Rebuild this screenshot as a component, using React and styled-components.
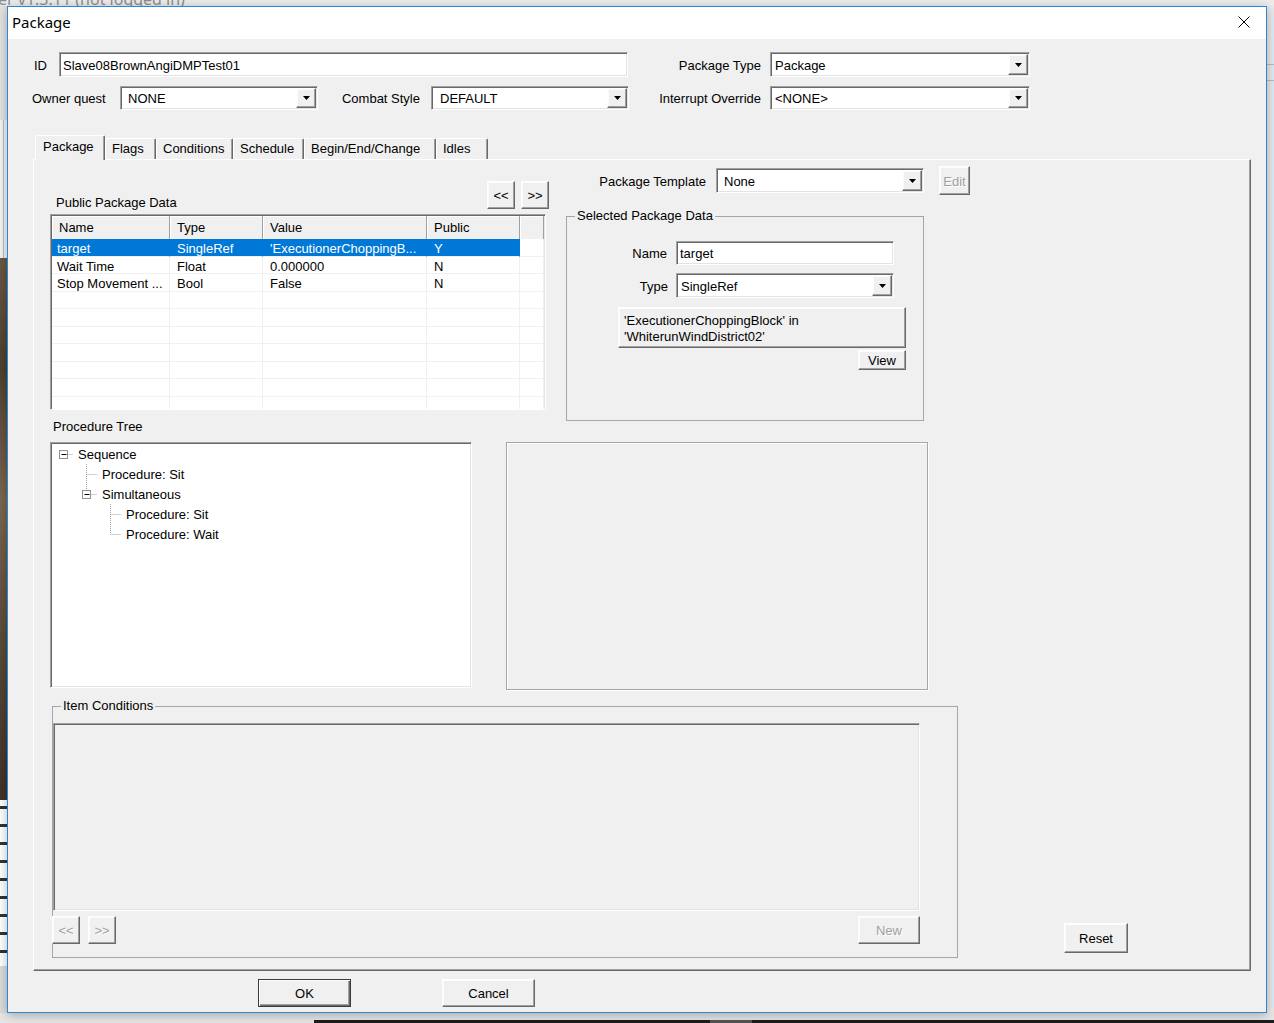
import React from 'react';
import styled, { createGlobalStyle, css } from 'styled-components';

const FONT = `"Liberation Sans", Arial, sans-serif`;

const GlobalStyle = createGlobalStyle`
  html, body { margin: 0; padding: 0; }
  body {
    width: 1274px; height: 1023px; overflow: hidden;
    background: #ececec;
    font-family: ${FONT}; font-size: 13px; color: #000;
  }
  * { box-sizing: border-box; }
`;

const raised = css`
  background: #f0f0f0;
  border: 1px solid;
  border-color: #fff #696969 #696969 #fff;
  box-shadow: inset -1px -1px #a0a0a0, inset 1px 1px #fbfbfb;
`;

const sunken = css`
  border: 1px solid;
  border-color: #a0a0a0 #fff #fff #a0a0a0;
  box-shadow: inset 1px 1px #696969, inset -1px -1px #e3e3e3;
`;

/* text sits 1px lower than a centred line box, as in the dialog font */
const lowText = css`
  line-height: 16px;
  padding-top: 2px;
`;

/* ---------- desktop & backdrop window ---------- */
const Desktop = styled.div`
  position: relative;
  width: 1274px;
  height: 1023px;
  overflow: hidden;
`;

const Backdrop = styled.div`
  position: absolute;
  inset: 0;
  display: grid;
  grid-template-columns: 7px 1fr 7px;
  grid-template-rows: 6px 1fr 10px;
  background: #ececec;
`;

const BackdropTitle = styled.div`
  grid-column: 1 / -1;
  height: 6px;
  overflow: hidden;
  white-space: nowrap;
  color: #8e8e8e;
  font: 16px/16px "Noto Sans", ${FONT};
  span { display: block; margin: -9px 0 0 -2px; }
`;

const BackdropSide = styled.div`
  display: flex;
  flex-direction: column;
`;

const Strip = styled.div`
  height: ${p => p.$h}px;
  flex: ${p => (p.$grow ? 1 : 'none')};
  background: ${p => p.$bg};
`;

const BackdropMain = styled.div`
  background: #f0f0f0;
`;

const BackdropBottom = styled.div`
  grid-column: 1 / -1;
  display: flex;
  align-items: flex-end;
  background: #e6e6e6;
`;

const TaskBar = styled.div`
  margin-left: 314px;
  flex: 1;
  height: 3px;
  background: linear-gradient(90deg, #1d1d1d 0 396px, #555 396px 438px, #1d1d1d 438px);
`;

/* ---------- dialog ---------- */
const Dialog = styled.div`
  position: absolute;
  left: 7px;
  top: 6px;
  width: 1260px;
  height: 1007px;
  border: 1px solid #2b88d8;
  background: #f0f0f0;
  display: flex;
  flex-direction: column;
  box-shadow: 0 2px 10px rgba(0, 0, 0, 0.28);
`;

const TitleBar = styled.div`
  height: 32px;
  flex: none;
  background: #fff;
  display: flex;
  align-items: center;
  justify-content: space-between;
  padding: 0 0 3px 4px;
`;

const TitleText = styled.span`
  font: 15px/20px "Noto Sans", ${FONT};
  color: #000;
`;

const CloseButton = styled.div`
  width: 44px;
  height: 29px;
  display: flex;
  align-items: center;
  justify-content: center;
  svg { display: block; }
`;

const Body = styled.div`
  flex: 1;
  display: flex;
  flex-direction: column;
  padding-top: 13px;
`;

const FormRow = styled.div`
  display: flex;
  align-items: center;
  height: ${p => p.$h}px;
  margin-top: ${p => p.$mt || 0}px;
  padding-left: ${p => p.$pl || 0}px;
`;

const Label = styled.span`
  ${lowText};
  flex: none;
  width: ${p => (p.$w ? `${p.$w}px` : 'auto')};
  text-align: ${p => (p.$right ? 'right' : 'left')};
  padding-right: ${p => p.$pr || 0}px;
  margin-left: ${p => p.$ml || 0}px;
  margin-top: ${p => p.$mt || 0}px;
  margin-bottom: ${p => p.$mb || 0}px;
  white-space: nowrap;
`;

const TextInput = styled.div`
  ${sunken};
  flex: none;
  width: ${p => p.$w}px;
  height: ${p => p.$h || 25}px;
  margin-left: ${p => p.$ml || 0}px;
  background: #fff;
  padding: 2px 0 0 3px;
  display: flex;
  align-items: center;
  line-height: 16px;
  white-space: nowrap;
`;

const ComboBox = styled.div`
  ${sunken};
  flex: none;
  width: ${p => p.$w}px;
  height: ${p => p.$h || 25}px;
  margin-left: ${p => p.$ml || 0}px;
  background: #fff;
  padding: 1px;
  display: flex;
`;

const ComboValue = styled.span`
  ${lowText};
  flex: 1;
  align-self: center;
  padding-left: ${p => p.$indent}px;
  white-space: nowrap;
`;

const DropButton = styled.span`
  ${raised};
  flex: none;
  width: 20px;
  display: flex;
  align-items: center;
  justify-content: center;
  svg { display: block; }
`;

function Combo({ w, h, ml, indent, value }) {
  return (
    <ComboBox $w={w} $h={h} $ml={ml}>
      <ComboValue $indent={indent}>{value}</ComboValue>
      <DropButton>
        <svg width="7" height="4" viewBox="0 0 7 4">
          <path d="M0 0H7L3.5 4Z" fill="#000" />
        </svg>
      </DropButton>
    </ComboBox>
  );
}

const Button = styled.div`
  ${raised};
  flex: none;
  width: ${p => p.$w}px;
  height: ${p => p.$h}px;
  margin-left: ${p => p.$ml || 0}px;
  margin-top: ${p => p.$mt || 0}px;
  margin-bottom: ${p => p.$mb || 0}px;
  padding-top: 2px;
  display: flex;
  align-items: center;
  justify-content: center;
  line-height: 16px;
  color: ${p => (p.$disabled ? '#a0a0a0' : '#000')};
  text-shadow: ${p => (p.$disabled ? '1px 1px 0 #fff' : 'none')};
  white-space: nowrap;
  ${p => p.$default && css`
    border-color: #3c3c3c;
    box-shadow: inset 1px 1px #fff, inset -1px -1px #696969, inset -2px -2px #a0a0a0;
  `}
`;

const RefButton = styled(Button)`
  justify-content: center;
  padding-left: 5px;
  flex-direction: column;
  align-items: flex-start;
  span { display: block; line-height: 16px; }
`;

/* ---------- tabs ---------- */
const TabArea = styled.div`
  margin: 25px 0 0 25px;
  display: flex;
  flex-direction: column;
`;

const TabStrip = styled.div`
  display: flex;
  align-items: flex-end;
  height: 24px;
  padding-left: 2px;
`;

const Tab = styled.div`
  position: relative;
  z-index: ${p => (p.$active ? 2 : 1)};
  flex: none;
  width: ${p => p.$w}px;
  height: ${p => (p.$active ? 25 : 21)}px;
  margin-bottom: ${p => (p.$active ? -1 : 0)}px;
  background: #f0f0f0;
  border-top: 1px solid #fff;
  border-left: 1px solid #fff;
  border-right: 1px solid #696969;
  box-shadow: inset -1px 0 #a0a0a0;
  border-radius: 2px 2px 0 0;
  padding: ${p => (p.$active ? '3px 0 0 7px' : '2px 0 0 6px')};
  line-height: 16px;
  white-space: nowrap;
`;

const TabPanel = styled.div`
  width: 1218px;
  height: 812px;
  border-top: 1px solid #fff;
  border-left: 1px solid #fff;
  border-right: 1px solid #696969;
  border-bottom: 1px solid #696969;
  box-shadow: inset -1px -1px #a0a0a0;
  display: flex;
  flex-direction: column;
`;

const TopSection = styled.div`
  display: flex;
  align-items: flex-start;
  margin: 6px 0 0 16px;
`;

const LeftColumn = styled.div`
  width: 499px;
  margin-top: 15px;
  display: flex;
  flex-direction: column;
  align-items: flex-start;
`;

const LabelBar = styled.div`
  align-self: stretch;
  height: 28px;
  display: flex;
  align-items: flex-end;
  justify-content: space-between;
`;

const ButtonPair = styled.div`
  display: flex;
  gap: ${p => p.$gap}px;
`;

const RightColumn = styled.div`
  margin-left: 17px;
  display: flex;
  flex-direction: column;
`;

/* ---------- list view ---------- */
const ListView = styled.div`
  ${sunken};
  width: 496px;
  height: 196px;
  margin-top: 5px;
  padding: 1px;
  background: #fff;
  overflow: hidden;
`;

const COLS = '118px 93px 164px 93px 1fr';

const HeaderRow = styled.div`
  display: grid;
  grid-template-columns: ${COLS};
  height: 23px;
`;

const HeaderCell = styled.div`
  background: #f0f0f0;
  border-right: 1px solid #a0a0a0;
  border-bottom: 1px solid #a0a0a0;
  box-shadow: inset 1px 1px #fff;
  padding: 1px 0 0 7px;
  line-height: 22px;
  white-space: nowrap;
`;

const DataRow = styled.div`
  display: grid;
  grid-template-columns: ${COLS};
  height: 17.5px;
`;

const DataCell = styled.div`
  border-right: 1px solid ${p => (p.$sel ? '#0078d7' : '#f0f0f0')};
  border-bottom: 1px solid #f0f0f0;
  background: ${p => (p.$sel ? '#0078d7' : '#fff')};
  color: ${p => (p.$sel ? '#fff' : '#000')};
  padding: 2px 0 0 ${p => (p.$first ? 5 : 7)}px;
  line-height: 16px;
  white-space: nowrap;
  overflow: hidden;
`;

/* ---------- group boxes ---------- */
const GroupBox = styled.fieldset`
  margin: 0;
  padding: 0;
  min-width: 0;
  flex: none;
  width: ${p => p.$w}px;
  height: ${p => p.$h}px;
  margin-top: ${p => p.$mt || 0}px;
  border: 1px solid #a6a6a6;
`;

const GroupLegend = styled.legend`
  margin-left: 8px;
  padding: 0 2px;
  font: 13px/16px ${FONT};
`;

const GroupContent = styled.div`
  display: flex;
  flex-direction: column;
`;

const RefBlock = styled.div`
  margin: 9px 0 0 51px;
  width: 288px;
  display: flex;
  flex-direction: column;
  align-items: flex-end;
`;

/* ---------- tree ---------- */
const MidRow = styled.div`
  display: flex;
  align-items: flex-start;
  margin: 7px 0 0 16px;
`;

const TreeView = styled.div`
  ${sunken};
  width: 422px;
  height: 246px;
  padding: 1px;
  background: #fff;
`;

const TreeRow = styled.div`
  display: flex;
  align-items: center;
  height: 20px;
`;

const TreeText = styled.span`
  ${lowText};
  margin-left: 4px;
  white-space: nowrap;
`;

const GuideSvg = styled.svg`
  display: block;
  flex: none;
`;

const EmptyFrame = styled.div`
  width: 422px;
  height: 248px;
  margin-left: 34px;
  border: 1px solid #a6a6a6;
  box-shadow: 1px 1px 0 #fff, inset 1px 1px 0 #fff;
`;

function Guide({ type, w }) {
  const cx = Math.floor(w / 2) + 0.5;
  const dot = { stroke: '#a0a0a0', strokeDasharray: '1 1', strokeWidth: 1 };
  const hasBox = type === 'box' || type === 'boxEll';
  return (
    <GuideSvg width={w} height={20} viewBox={`0 0 ${w} 20`}>
      {type === 'tee' && <line x1={cx} y1={0} x2={cx} y2={20} {...dot} />}
      {type === 'ell' && <line x1={cx} y1={0} x2={cx} y2={10.5} {...dot} />}
      {type === 'boxEll' && <line x1={cx} y1={0} x2={cx} y2={6} {...dot} />}
      {(type === 'tee' || type === 'ell') && <line x1={cx + 1} y1={10.5} x2={w - 1} y2={10.5} {...dot} />}
      {hasBox && (
        <>
          <line x1={cx + 5} y1={10.5} x2={w - 1} y2={10.5} {...dot} />
          <rect x={cx - 4} y={6.5} width={8} height={8} fill="#fff" stroke="#919191" />
          <line x1={cx - 2} y1={10.5} x2={cx + 3} y2={10.5} stroke="#000" />
        </>
      )}
    </GuideSvg>
  );
}

const GUIDE_W = [22, 24, 24];

const TREE = [
  { guides: ['box'], text: 'Sequence' },
  { guides: ['none', 'tee'], text: 'Procedure: Sit' },
  { guides: ['none', 'boxEll'], text: 'Simultaneous' },
  { guides: ['none', 'none', 'tee'], text: 'Procedure: Sit' },
  { guides: ['none', 'none', 'ell'], text: 'Procedure: Wait' },
];

/* ---------- bottom ---------- */
const BottomRow = styled.div`
  display: flex;
  align-items: flex-end;
  margin: 8px 0 0 18px;
`;

const InnerSunken = styled.div`
  ${sunken};
  width: 867px;
  height: 188px;
  margin-top: 9px;
  background: #f0f0f0;
`;

const ItemButtons = styled.div`
  display: flex;
  width: 868px;
  margin: 5px 0 0 -1px;
  gap: 8px;
`;

const Spacer = styled.div`
  flex: 1;
`;

const Footer = styled.div`
  display: flex;
  margin-top: 8px;
  padding-left: 250px;
  gap: 91px;
`;

const LIST = [
  { sel: true, cells: ['target', 'SingleRef', "'ExecutionerChoppingB...", 'Y'] },
  { cells: ['Wait Time', 'Float', '0.000000', 'N'] },
  { cells: ['Stop Movement ...', 'Bool', 'False', 'N'] },
  ...Array.from({ length: 7 }, () => ({ cells: ['', '', '', ''] })),
];

const TABS = [
  { label: 'Package', w: 70, active: true },
  { label: 'Flags', w: 51 },
  { label: 'Conditions', w: 77 },
  { label: 'Schedule', w: 71 },
  { label: 'Begin/End/Change', w: 132 },
  { label: 'Idles', w: 52 },
];

export default function App() {
  return (
    <>
      <GlobalStyle />
      <Desktop>
        <Backdrop>
          <BackdropTitle><span>er v1.3.11 (not logged in)</span></BackdropTitle>
          <BackdropSide>
            <Strip $h={114} $bg="#e2e2e2" />
            <Strip $h={138} $bg="linear-gradient(90deg, #f4f4f4 0 3px, #bdbdbd 3px 4px, #f4f4f4 4px)" />
            <Strip $h={542} $bg="linear-gradient(180deg, #6a5843, #4e3f30 20%, #7b6751 45%, #5a4a39 70%, #3f3327)" />
            <Strip $h={166} $bg="repeating-linear-gradient(180deg, #fff 0 6px, #333 6px 9px, #fff 9px 18px)" />
            <Strip $grow $bg="#dcdcdc" />
          </BackdropSide>
          <BackdropMain />
          <BackdropSide>
            <Strip $grow $bg="linear-gradient(180deg, #e9e9e9 0 58px, #bcbcbc 58px 59px, #e9e9e9 59px 74px, #bcbcbc 74px 75px, #e9e9e9 75px)" />
          </BackdropSide>
          <BackdropBottom>
            <TaskBar />
          </BackdropBottom>
        </Backdrop>

        <Dialog>
          <TitleBar>
            <TitleText>Package</TitleText>
            <CloseButton>
              <svg width="12" height="12" viewBox="0 0 12 12">
                <path d="M0.5 0.5L11.5 11.5M11.5 0.5L0.5 11.5" stroke="#000" strokeWidth="1" />
              </svg>
            </CloseButton>
          </TitleBar>

          <Body>
            <FormRow $h={25} $pl={26}>
              <Label $w={25}>ID</Label>
              <TextInput $w={569}>Slave08BrownAngiDMPTest01</TextInput>
              <Label $w={142} $right $pr={9}>Package Type</Label>
              <Combo w={260} indent={3} value="Package" />
            </FormRow>

            <FormRow $h={24} $mt={9} $pl={24}>
              <Label $w={88}>Owner quest</Label>
              <Combo w={198} h={24} indent={6} value="NONE" />
              <Label $w={113} $right $pr={11}>Combat Style</Label>
              <Combo w={198} h={24} indent={7} value="DEFAULT" />
              <Label $w={141} $right $pr={9}>Interrupt Override</Label>
              <Combo w={260} h={24} indent={3} value="<NONE>" />
            </FormRow>

            <TabArea>
              <TabStrip>
                {TABS.map(t => (
                  <Tab key={t.label} $w={t.w} $active={t.active}>{t.label}</Tab>
                ))}
              </TabStrip>

              <TabPanel>
                <TopSection>
                  <LeftColumn>
                    <LabelBar>
                      <Label $ml={6} $mb={-2}>Public Package Data</Label>
                      <ButtonPair $gap={6}>
                        <Button $w={28} $h={28}>&lt;&lt;</Button>
                        <Button $w={28} $h={28}>&gt;&gt;</Button>
                      </ButtonPair>
                    </LabelBar>

                    <ListView>
                      <HeaderRow>
                        <HeaderCell>Name</HeaderCell>
                        <HeaderCell>Type</HeaderCell>
                        <HeaderCell>Value</HeaderCell>
                        <HeaderCell>Public</HeaderCell>
                        <HeaderCell />
                      </HeaderRow>
                      {LIST.map((r, i) => (
                        <DataRow key={i}>
                          {r.cells.map((c, j) => (
                            <DataCell key={j} $sel={r.sel} $first={j === 0}>{c}</DataCell>
                          ))}
                          <DataCell />
                        </DataRow>
                      ))}
                    </ListView>

                    <Label $ml={3} $mt={7}>Procedure Tree</Label>
                  </LeftColumn>

                  <RightColumn>
                    <FormRow $h={29}>
                      <Label $w={150} $right $pr={10}>Package Template</Label>
                      <Combo w={208} indent={6} value="None" />
                      <Button $w={31} $h={29} $ml={15} $disabled>Edit</Button>
                    </FormRow>

                    <GroupBox $w={358} $h={213} $mt={13}>
                      <GroupLegend>Selected Package Data</GroupLegend>
                      <GroupContent>
                        <FormRow $h={24} $mt={17}>
                          <Label $w={100} $right>Name</Label>
                          <TextInput $w={218} $h={24} $ml={9}>target</TextInput>
                        </FormRow>
                        <FormRow $h={25} $mt={8}>
                          <Label $w={101} $right>Type</Label>
                          <Combo w={218} ml={8} indent={3} value="SingleRef" />
                        </FormRow>
                        <RefBlock>
                          <RefButton $w={288} $h={41}>
                            <span>'ExecutionerChoppingBlock' in</span>
                            <span>'WhiterunWindDistrict02'</span>
                          </RefButton>
                          <Button $w={48} $h={20} $mt={2}>View</Button>
                        </RefBlock>
                      </GroupContent>
                    </GroupBox>
                  </RightColumn>
                </TopSection>

                <MidRow>
                  <TreeView>
                    {TREE.map((n, i) => (
                      <TreeRow key={i}>
                        {n.guides.map((g, k) => (
                          <Guide key={k} type={g} w={GUIDE_W[k]} />
                        ))}
                        <TreeText>{n.text}</TreeText>
                      </TreeRow>
                    ))}
                  </TreeView>
                  <EmptyFrame />
                </MidRow>

                <BottomRow>
                  <GroupBox $w={906} $h={260}>
                    <GroupLegend>Item Conditions</GroupLegend>
                    <GroupContent>
                      <InnerSunken />
                      <ItemButtons>
                        <Button $w={28} $h={28} $disabled>&lt;&lt;</Button>
                        <Button $w={28} $h={28} $disabled>&gt;&gt;</Button>
                        <Spacer />
                        <Button $w={62} $h={28} $disabled>New</Button>
                      </ItemButtons>
                    </GroupContent>
                  </GroupBox>
                  <Button $w={64} $h={30} $ml={106} $mb={5}>Reset</Button>
                </BottomRow>
              </TabPanel>
            </TabArea>

            <Footer>
              <Button $w={93} $h={28} $default>OK</Button>
              <Button $w={93} $h={28}>Cancel</Button>
            </Footer>
          </Body>
        </Dialog>
      </Desktop>
    </>
  );
}
